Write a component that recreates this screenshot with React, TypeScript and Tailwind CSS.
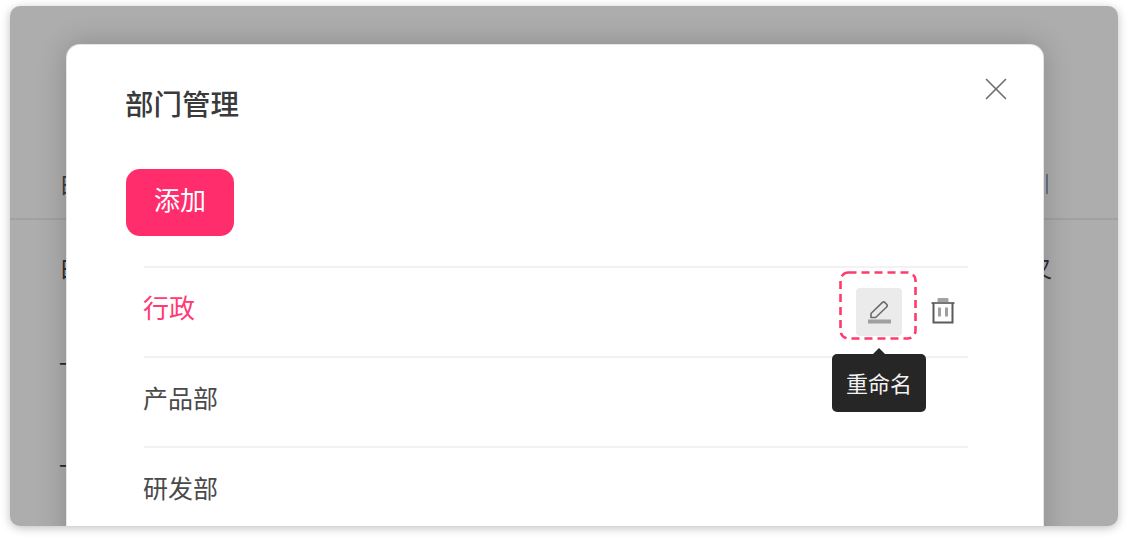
import { X } from "lucide-react";

const font = "font-['Noto_Sans_CJK_SC','Noto_Sans',sans-serif]";

function PenIcon() {
  return (
    <svg width="26" height="26" viewBox="0 0 26 26" fill="none">
      <path
        d="M5 14.5 16.2 3.6a2 2 0 0 1 2.8 0l1.6 1.6a2 2 0 0 1 0 2.8L9.6 18.5H5Z"
        stroke="#6b6b6b"
        strokeWidth="1.6"
        strokeLinejoin="round"
      />
      <rect x="2" y="20.5" width="23" height="4" fill="#a0a0a0" />
    </svg>
  );
}

function TrashIcon() {
  return (
    <svg width="24" height="26" viewBox="0 0 24 26" fill="none">
      <rect x="6.5" y="0" width="11" height="5" rx="1" fill="#a3a3a3" />
      <path d="M0.5 5h23" stroke="#777" strokeWidth="2" />
      <path d="M2.5 5v19.5h19V5" stroke="#5a5a5a" strokeWidth="2" />
      <path d="M8.5 9.5v9M15.5 9.5v9" stroke="#a0a0a0" strokeWidth="3" />
    </svg>
  );
}

function Row({ label, active }: { label: string; active?: boolean }) {
  return (
    <div className="flex h-[90px] items-center justify-between border-t-2 border-[#f2f2f2] pb-[10px]">
      <span
        className={
          active
            ? "ml-[-1px] text-[26px] leading-none text-[#ff3a75]"
            : "ml-[-1px] text-[25px] leading-none text-[#4a4a4a]"
        }
      >
        {label}
      </span>
      {active && (
        <div className="mr-[13px] flex items-center gap-[29px] pt-[10px]">
          <div className="relative flex h-[48px] w-[46px] items-center justify-center rounded-[4px] bg-[#ebebeb]">
            <PenIcon />
            <svg
              className="absolute left-[-17px] top-[-17px]"
              width="78"
              height="69"
              viewBox="0 0 78 69"
              fill="none"
            >
              <rect
                x="1.5"
                y="1.5"
                width="75"
                height="66"
                rx="8"
                stroke="#ff3a6e"
                strokeWidth="2.6"
                strokeDasharray="8 5"
              />
            </svg>
            <div className="absolute left-[-24px] top-[66px] z-10 flex h-[58px] w-[94px] items-center justify-center rounded-[5px] bg-[#262626] pb-[2px] text-[22px] leading-none text-[#f2f2f2]">
              <span className="absolute left-[40px] top-[-6px] size-0 border-x-[7px] border-b-[7px] border-x-transparent border-b-[#262626]" />
              重命名
            </div>
          </div>
          <div className="mb-[3px]">
            <TrashIcon />
          </div>
        </div>
      )}
    </div>
  );
}

export default function App() {
  return (
    <div className={`h-[540px] w-[1128px] overflow-hidden bg-white pl-[10px] pt-[6px] ${font}`}>
      <div className="relative h-[520px] w-[1108px] overflow-hidden rounded-[10px] bg-[#adadad] shadow-[0_2px_10px_rgba(0,0,0,0.25)]">
        {/* page behind the mask, mostly covered by the dialog */}
        <div className="flex h-[214px] items-end justify-between border-b-2 border-[#a1a1a1] pb-[24px] pl-[49px] pr-[70px] text-[22px] leading-none text-[#3a3a3a]">
          <span>日</span>
          <span className="h-[20px] w-[2px] bg-[#65738f]" />
        </div>
        <div className="flex justify-between pl-[49px] pr-[66px] pt-[36px] text-[22px] leading-none text-[#2b2b2b]">
          <span>日</span>
          <span>又</span>
        </div>
        <div className="px-[49px] pt-[73px] text-[22px] leading-none text-[#2b2b2b]">一</div>
        <div className="px-[49px] pt-[80px] text-[22px] leading-none text-[#2b2b2b]">一</div>

        <div className="absolute left-[57px] top-[39px] h-[520px] w-[976px] rounded-[13px] bg-white shadow-[0_0_30px_rgba(0,0,0,0.22)] ring-1 ring-[#e6e6e6]">
          <div className="flex items-start justify-between pl-[58px] pr-[28px] pt-[33px]">
            <h1 className="text-[28.5px] font-medium leading-[50px] text-[#3a3a3a]">部门管理</h1>
            <X className="mt-[-8px] text-[#707070]" size={38} strokeWidth={1.1} />
          </div>
          <button className="ml-[59px] mt-[41px] flex h-[67px] w-[108px] items-center justify-center rounded-[14px] bg-[#ff2d6c] pb-[8px] text-[26px] leading-none text-white">
            添加
          </button>
          <div className="ml-[77px] mr-[75px] mt-[30px]">
            <Row label="行政" active />
            <Row label="产品部" />
            <Row label="研发部" />
          </div>
        </div>
      </div>
    </div>
  );
}
